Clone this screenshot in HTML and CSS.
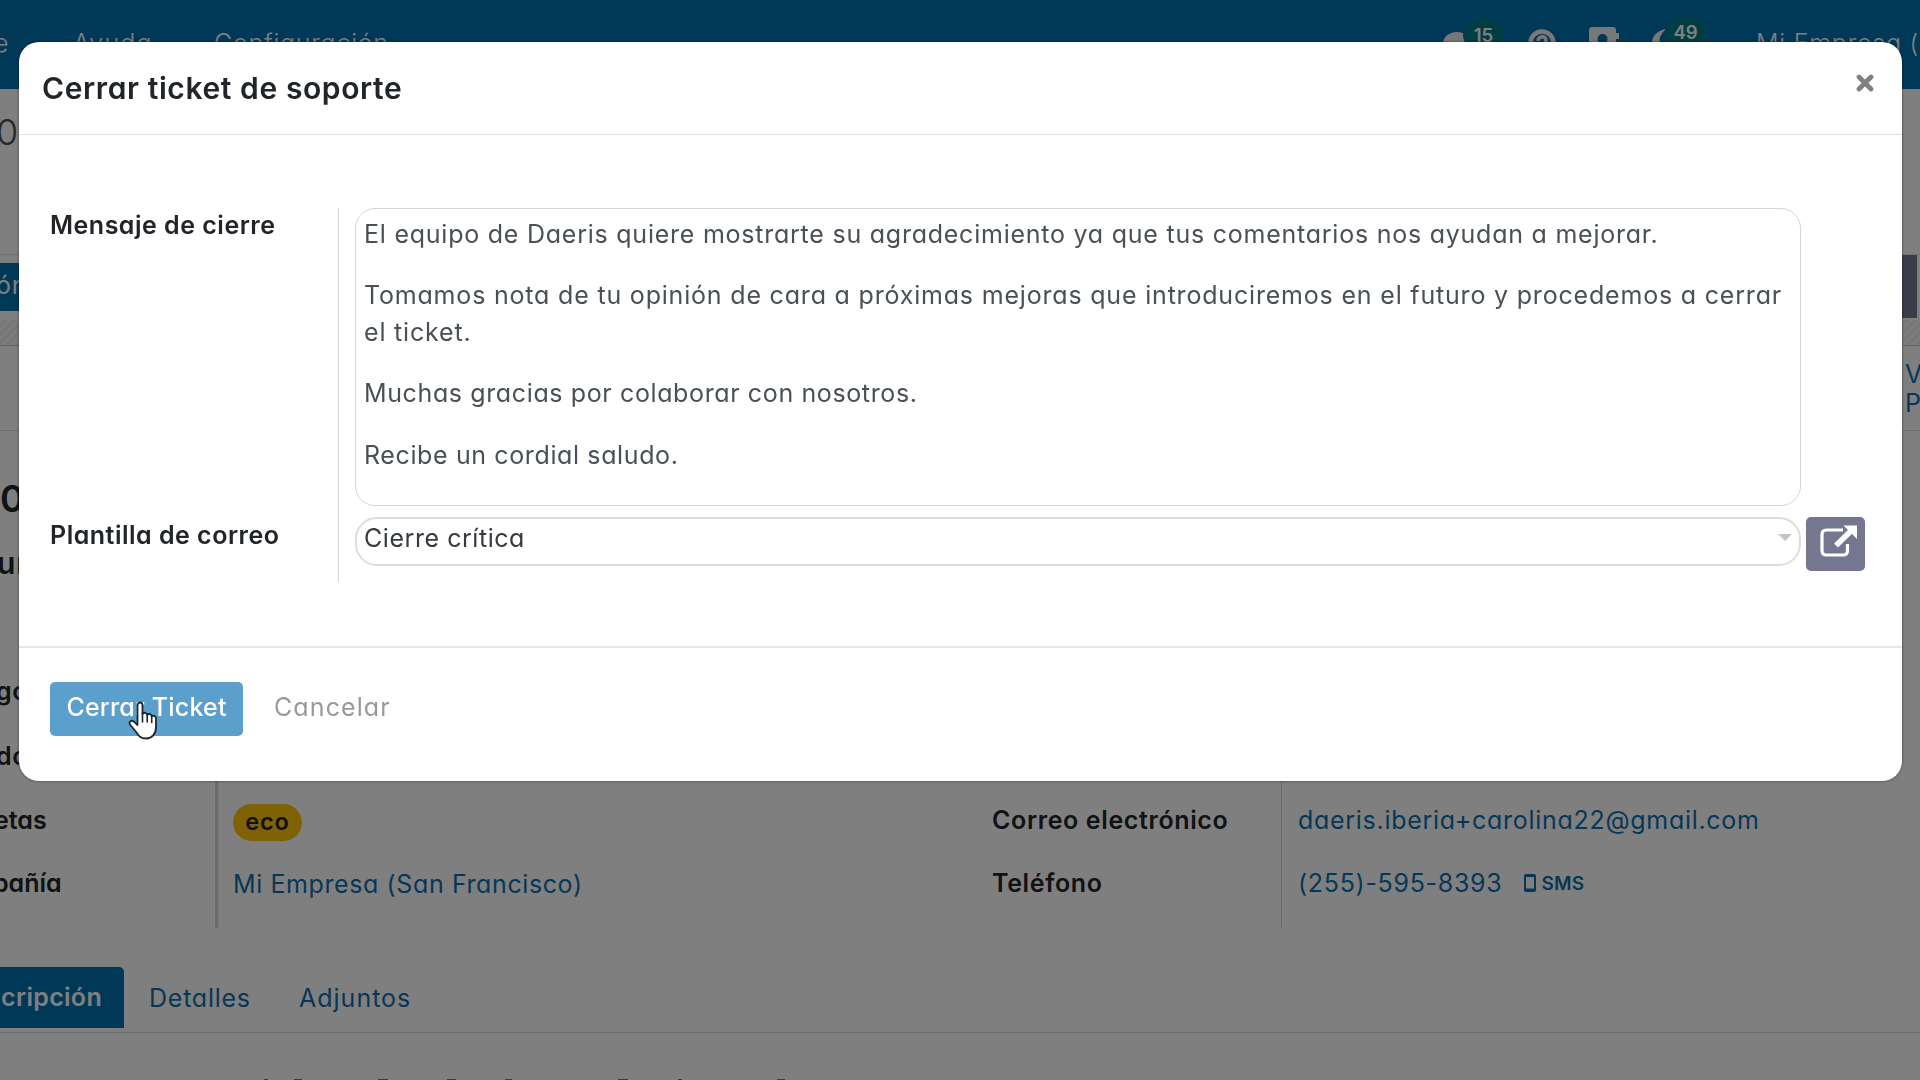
FILE: index.html
```html
<!DOCTYPE html>
<html lang="es">
<head>
<meta charset="utf-8">
<title>Cerrar ticket de soporte</title>
<link rel="stylesheet" href="styles.css">
</head>
<body>
<div class="page">
  <nav class="navbar">
    <span class="menu menu-first">e</span>
    <span class="menu menu-help">Ayuda</span>
    <span class="menu">Configuración</span>
    <div class="systray">
      <span class="tray tray-chat">
        <svg width="30" height="28" viewBox="0 0 30 28"><path fill="currentColor" d="M15 1C7 1 1 6 1 12.500c0 3 1 5 3 7L2 27l8-3.500c2 .5 3 .5 5 .5 8 0 14-5 14-11.500S23 1 15 1z"/></svg>
        <span class="badge badge-chat">15</span>
      </span>
      <span class="tray tray-help">
        <svg width="28" height="28" viewBox="0 0 28 28"><circle cx="14" cy="14" r="11.500" fill="none" stroke="currentColor" stroke-width="4.500"/><path d="M10 12c0-5.500 8-5.500 8-.5 0 3-4 3-4 6" fill="none" stroke="currentColor" stroke-width="3.500"/></svg>
      </span>
      <span class="tray tray-book">
        <svg width="31" height="32" viewBox="0 0 31 32"><path fill="currentColor" fill-rule="evenodd" d="M3 0h21q3 0 3 3v3h3v6h-3v17q0 3-3 3H3q-3 0-3-3V3q0-3 3-3zm10.500 7a5 5 0 1 0 0 10 5 5 0 0 0 0-10zM6 25h15c0-8-15-8-15 0z"/></svg>
      </span>
      <span class="tray tray-moon">
        <svg width="28" height="28" viewBox="0 0 28 28"><path fill="currentColor" d="M14 0C6 1 0 7 0 14s6 14 14 14c5 0 9-2 12-6C9 25 1 12 14 0z"/></svg>
        <span class="badge badge-moon">49</span>
      </span>
      <span class="menu">Mi Empresa (S</span>
    </div>
  </nav>
  <div class="breadcrumb">0</div>
  <div class="actions"><span class="btn-left">ón</span><span class="btn-right"></span></div>
  <div class="strip"></div>
  <div class="stats"><span>V</span><span>P</span></div>
  <div class="sheet-title">0</div>
  <div class="sheet-subtitle">un</div>
  <div class="groups">
    <div class="group group-left">
      <div class="labels"><span class="edge-o">go</span><span class="edge-o">do</span><span class="edge-s">etas</span><span class="edge-a">pañía</span></div>
      <div class="values"><span></span><span></span><span><b class="tag">eco</b></span><span class="link company">Mi Empresa (San Francisco)</span></div>
    </div>
    <div class="group group-right">
      <div class="labels"><span></span><span></span><span>Correo electrónico</span><span>Teléfono</span></div>
      <div class="values"><span></span><span></span><span class="link email">daeris.iberia+carolina22@gmail.com</span>
        <span class="link phone">(255)-595-8393
          <svg width="12" height="18" viewBox="0 0 12 18"><path fill="currentColor" fill-rule="evenodd" d="M2 0h8q2 0 2 2v14q0 2-2 2H2q-2 0-2-2V2q0-2 2-2zm0 3v11.500h8V3z"/></svg>
          <b class="sms">SMS</b></span>
      </div>
    </div>
  </div>
  <div class="tabs">
    <span class="tab active">cripción</span><span class="tab details">Detalles</span><span class="tab files">Adjuntos</span>
  </div>
  <div class="pane">
    <svg width="1920" height="2" viewBox="0 0 1920 2"><path d="M264 1h4M294 1h8M378 1h10M447 1h9M505 1h7M618 1h10M678 1h4M777 1h8" stroke="#777" stroke-width="2"/></svg>
  </div>
</div>

<div class="backdrop">
  <section class="modal">
    <header class="modal-header">
      <h4>Cerrar ticket de soporte</h4>
      <svg class="close" width="18" height="18" viewBox="0 0 18 18"><path d="M3 3l12 12M15 3L3 15" stroke="#808080" stroke-width="4.800" stroke-linecap="round"/></svg>
    </header>
    <div class="modal-body">
      <div class="form-labels"><label>Mensaje de cierre</label><label>Plantilla de correo</label></div>
      <div class="form-fields">
        <div class="message">
          <p>El equipo de Daeris quiere mostrarte su agradecimiento ya que tus comentarios nos ayudan a mejorar.</p>
          <p class="second">Tomamos nota de tu opinión de cara a próximas mejoras que introduciremos en el futuro y procedemos a cerrar<br>el ticket.</p>
          <p class="third">Muchas gracias por colaborar con nosotros.</p>
          <p class="third">Recibe un cordial saludo.</p>
        </div>
        <div class="template">
          <div class="select"><span>Cierre crítica</span><svg width="14" height="7" viewBox="0 0 14 7"><path d="M0 0h14L7 7z" fill="#c4c4c4"/></svg></div>
          <div class="open">
            <svg width="40" height="36" viewBox="0 0 40 36"><path d="M24 6H7.500Q3 6 3 10.500v16Q3 31 7.500 31H24q4.500 0 4.500-4.500V20" fill="none" stroke="#fff" stroke-width="3.200"/><path d="M17 21.500L34 5" stroke="#fff" stroke-width="5.500"/><path d="M24.500 1.500H38V15z" fill="#fff"/></svg>
          </div>
        </div>
      </div>
    </div>
    <footer class="modal-footer">
      <div class="btn-primary">Cerrar Ticket
        <svg class="cursor" width="30" height="39" viewBox="0 0 30 39"><path d="M9.500 20V4.500c0-4 5-4 5 0V13c1-2 4.500-1.500 4.700.8 1.300-1.500 4.300-.8 4.500 1.500 1.800-1.300 4.300-.2 4.300 2.200V26c0 7-4 11.500-10 11.500-5 0-7-2-9.500-6L2 23.500c-1.500-3 1.500-5 4-2.800L9.500 24z" fill="#fff" stroke="#1b2733" stroke-width="1.800" stroke-linejoin="round"/><path d="M14.500 12v9M19.200 13.500V21M23.700 15v6.500" stroke="#1b2733" stroke-width="1.600" stroke-linecap="round"/></svg>
      </div>
      <div class="btn-cancel">Cancelar</div>
    </footer>
  </section>
</div>
</body>
</html>
```
FILE: styles.css
```css
* { box-sizing: border-box; }
body {
  margin: 0;
  width: 1920px;
  height: 1080px;
  overflow: hidden;
  background: #fff;
  color: #212529;
  font-family: Inter, "Liberation Sans", sans-serif;
  font-feature-settings: "cv11";
  font-size: 25px;
  letter-spacing: .76px;
  white-space: nowrap;
}
svg { display: block; flex: none; }
.page { height: 1080px; overflow: hidden; display: flex; flex-direction: column; }
.page > * { flex: none; }

.navbar { height: 89px; background: #0070b0; color: #fff; display: flex; align-items: center; padding-bottom: 3px; }
.menu { font-weight: 300; }
.menu-first { width: 73px; display: block; text-indent: -6px; }
.menu-help { width: 141px; letter-spacing: 1.200px; }
.systray { margin-left: auto; width: 478px; display: flex; align-items: center; overflow: hidden; height: 86px; }
.tray { position: relative; flex: none; height: 86px; color: #f0f0f0; }
.tray-chat { width: 86px; padding-top: 31px; }
.tray-help { width: 61px; padding-top: 29px; }
.tray-book { width: 63px; padding-top: 27px; }
.tray-moon { width: 104px; padding-top: 29px; }
.badge {
  position: absolute; width: 41px; height: 30px; border-radius: 15px;
  background: #007a85; color: #fff; font-size: 18.500px; font-weight: 600;
  line-height: 30px; text-align: center; letter-spacing: 0;
}
.badge-chat { left: 21px; top: 20px; }
.badge-moon { left: 13px; top: 17px; }

.breadcrumb { height: 166px; border-bottom: 1px solid #e4e4e4; font-size: 36px; font-weight: 300; line-height: 86px; text-indent: -4px; color: #495057; }
.actions { height: 65px; display: flex; justify-content: space-between; align-items: flex-start; padding-right: 3px; }
.btn-left { width: 60px; height: 48px; margin-top: 8px; background: #0070b0; color: #fff; line-height: 45px; text-indent: -4px; }
.btn-right { width: 60px; height: 63px; background: #767892; }
.strip { height: 26px; border-bottom: 1px solid #c4c4c4; background: repeating-linear-gradient(135deg, #f8f8f8 0 3px, #eee 3px 6px); }
.stats { height: 85px; border-bottom: 1px solid #dcdcdc; padding: 14px 0 0 1905px; display: flex; flex-direction: column; line-height: 29px; color: #0f6fae; overflow: hidden; }
.sheet-title { margin-top: 40px; font-size: 37px; font-weight: 600; line-height: 55px; }
.sheet-subtitle { font-size: 30px; font-weight: 600; line-height: 74px; margin-bottom: 59px; text-indent: -3px; }

.groups { display: grid; grid-template-columns: 992px 1fr; height: 269px; }
.group { display: grid; }
.group-left { grid-template-columns: 215px 1fr; }
.group-right { grid-template-columns: 289px 1fr; }
.labels, .values { display: grid; grid-template-rows: 64px 66px 61px 66px; align-items: center; }
.labels { font-weight: 600; letter-spacing: .62px; }
.group-left .values { border-left: 3px solid #d4d4d4; padding-left: 15px; }
.group-right .values { border-left: 1px solid #d0d0d0; padding-left: 16px; }
.edge-o { text-indent: -4px; }
.edge-s { text-indent: -6px; letter-spacing: 0; }
.edge-a { text-indent: -7px; letter-spacing: 0; }
.link { color: #0f6fae; }
.company { letter-spacing: .6px; padding-top: 2px; }
.email { letter-spacing: .71px; }
.phone { display: flex; align-items: center; letter-spacing: .7px; }
.phone svg { margin-left: 22px; }
.sms { font-size: 19px; font-weight: 600; letter-spacing: .2px; margin-left: 5px; }
.tag { display: flex; align-items: center; width: 69px; height: 37px; border-radius: 19px; background: #ffc30d; justify-content: center; font-size: 23.500px; font-weight: 600; letter-spacing: .8px; margin-top: 5px; padding-bottom: 1px; }

.tabs { margin-top: 39px; height: 66px; border-bottom: 1px solid #d6d9dd; display: flex; line-height: 62px; color: #0f6fae; }
.tab.active { width: 124px; height: 61px; background: #0070b0; color: #fff; font-weight: 600; border-top-right-radius: 5px; letter-spacing: .3px; display: flex; justify-content: flex-end; padding-right: 22px; line-height: 60px; }
.tab.details { margin-left: 25px; width: 150px; }
.tab.files { letter-spacing: 1px; }
.pane { padding-top: 46px; }

.backdrop { position: fixed; inset: 0; background: rgba(0, 0, 0, .5); padding: 42px 0 0 19px; }
.modal { width: 1883px; height: 739px; background: #fff; border-radius: 20px; box-shadow: 0 0 3px rgba(0, 0, 0, .5); display: flex; flex-direction: column; }
.modal-header { height: 93px; border-bottom: 1px solid #dee2e6; display: flex; align-items: center; justify-content: space-between; padding: 0 28px 0 23px; }
.modal-header h4 { margin: 0; font-size: 30px; font-weight: 600; letter-spacing: .6px; }
.close { margin-bottom: 10px; }
.modal-body { height: 513px; padding: 73px 37px 0 31px; display: grid; grid-template-columns: 288px 1fr; grid-template-rows: 374px; border-bottom: 2px solid #e5e7e9; }
.form-labels { display: grid; grid-template-rows: 310px 1fr; line-height: 34px; font-weight: 600; letter-spacing: .5px; }
.form-fields { border-left: 1px solid #d4d4d4; padding-left: 16px; display: flex; flex-direction: column; gap: 11px; }
.message { width: 1446px; height: 298px; border: 1px solid #d6d6d6; border-radius: 20px; padding: 7px 8px 0; line-height: 36.800px; color: #495057; }
.message p { margin: 0 0 24.500px; }
.message .second { letter-spacing: .81px; }
.message .third { letter-spacing: .62px; }
.template { display: flex; gap: 5px; }
.select { width: 1446px; height: 49px; border: 2px solid #dcdcdc; border-radius: 22px; padding: 0 7px 8px 7px; display: flex; align-items: center; justify-content: space-between; letter-spacing: .55px; color: #343a40; }
.open { width: 59px; height: 54px; border-radius: 5px; background: #74778f; padding: 7px 0 0 13px; }
.modal-footer { padding: 34px 31px; display: flex; line-height: 51px; }
.btn-primary { position: relative; width: 193px; height: 54px; border-radius: 5px; background: #5b9fcd; color: #fff; font-weight: 500; text-align: center; letter-spacing: .2px; }
.btn-cancel { margin-left: 31px; color: #999; letter-spacing: 1.100px; }
.cursor { position: absolute; left: 78px; top: 19px; }
```
